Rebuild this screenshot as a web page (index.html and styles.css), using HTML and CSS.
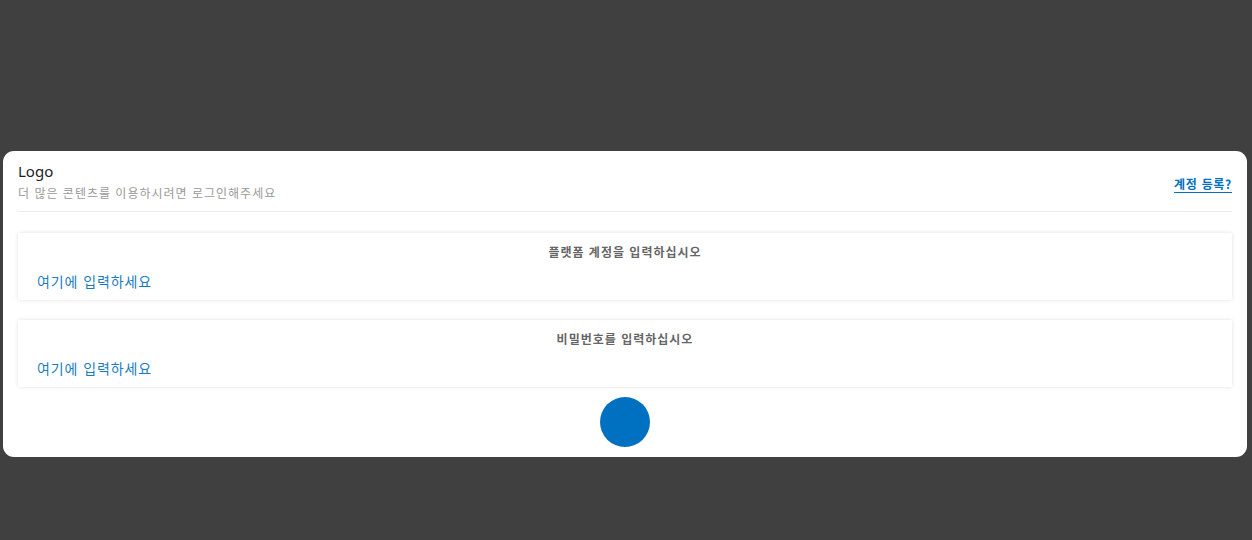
FILE: index.html
```html
<!DOCTYPE html>
<html lang="ko">
<head>
<meta charset="utf-8">
<title>Login</title>
<link rel="stylesheet" href="styles.css">
</head>
<body>
<div class="stage">
  <div class="card">
    <div class="card-header">
      <div class="brand">
        <div class="logo">Logo</div>
        <div class="subtitle">더 많은 콘텐츠를 이용하시려면 로그인해주세요</div>
      </div>
      <a class="register" href="#">계정 등록?</a>
    </div>
    <div class="card-body">
      <div class="field">
        <div class="field-label">플랫폼 계정을 입력하십시오</div>
        <div class="field-input">여기에 입력하세요</div>
      </div>
      <div class="field">
        <div class="field-label">비밀번호를 입력하십시오</div>
        <div class="field-input">여기에 입력하세요</div>
      </div>
      <div class="actions">
        <button class="submit" type="button" aria-label="로그인"></button>
      </div>
    </div>
  </div>
</div>
</body>
</html>
```
FILE: styles.css
```css
html, body {
  margin: 0;
  padding: 0;
  height: 100%;
}
body {
  background: #404040;
  font-family: "Noto Sans", "Noto Sans CJK KR", sans-serif;
}
.stage {
  padding: 151px 5px 0 3px;
}
.card {
  background: #ffffff;
  border-radius: 11px;
  padding: 0 15px 10px;
}
.card-header {
  display: flex;
  align-items: center;
  justify-content: space-between;
  padding: 10px 0 9px;
  border-bottom: 1px solid #ececec;
}
.brand {
  display: flex;
  flex-direction: column;
}
.logo {
  font-size: 15px;
  line-height: 20px;
  color: #1e1e1e;
}
.subtitle {
  font-family: "Noto Sans CJK KR", sans-serif;
  font-size: 12px;
  line-height: 18px;
  margin-top: 3px;
  letter-spacing: 1px;
  color: #9a9a9a;
}
.register {
  font-family: "Noto Sans CJK KR", sans-serif;
  font-size: 12px;
  font-weight: 700;
  letter-spacing: 0.7px;
  color: #0070c0;
  text-decoration: underline;
  text-underline-offset: 3px;
  margin-top: 4px;
}
.card-body {
  display: flex;
  flex-direction: column;
  gap: 20px;
  padding-top: 21px;
}
.field {
  display: flex;
  flex-direction: column;
  height: 67px;
  box-sizing: border-box;
  padding: 10px 19px 8px;
  box-shadow: 0 0 4px rgba(0, 0, 0, 0.12);
}
.field-label {
  font-family: "Noto Sans CJK KR", sans-serif;
  text-align: center;
  font-size: 12px;
  font-weight: 700;
  line-height: 18px;
  letter-spacing: 1px;
  color: #666666;
}
.field-input {
  font-family: "Noto Sans CJK KR", sans-serif;
  margin-top: 10px;
  font-size: 14px;
  line-height: 20px;
  letter-spacing: 0.9px;
  color: #1a7bc4;
}
.actions {
  display: flex;
  justify-content: center;
  margin-top: -10px;
}
.submit {
  width: 50px;
  height: 50px;
  border: none;
  border-radius: 50%;
  background: #0070c0;
  padding: 0;
}
```
